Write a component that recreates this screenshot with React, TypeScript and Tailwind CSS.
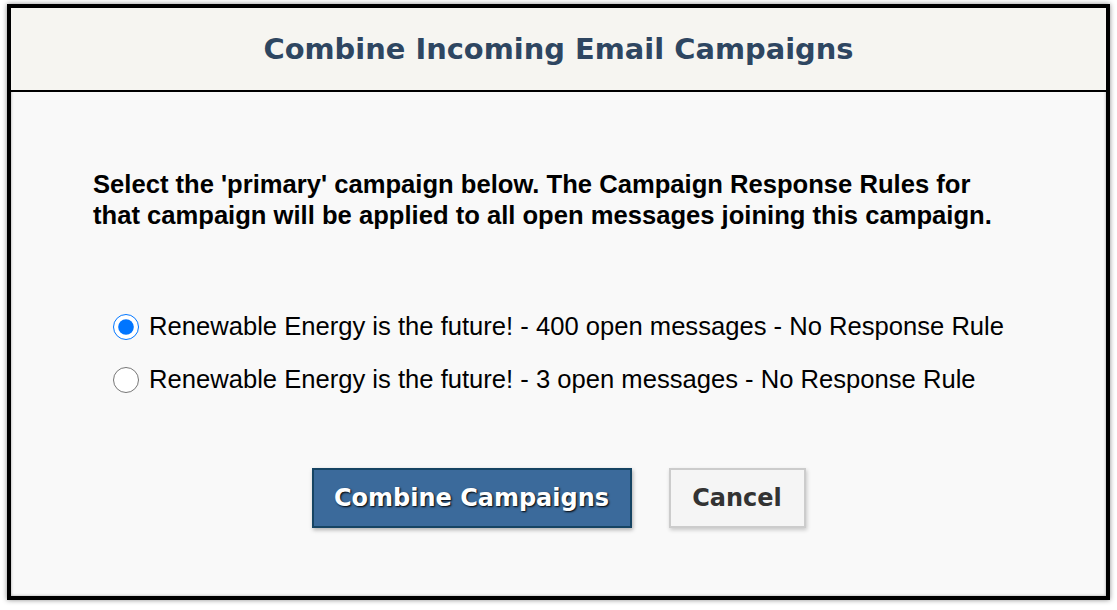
import { useState } from "react";

const campaigns = [
  { id: "c400", label: "Renewable Energy is the future! - 400 open messages - No Response Rule" },
  { id: "c3", label: "Renewable Energy is the future! - 3 open messages - No Response Rule" },
];

export default function App() {
  const [primary, setPrimary] = useState("c400");

  return (
    <div className="h-[610px] w-[1117px] overflow-hidden bg-white pl-[7px] pt-[4px]">
      <div className="flex h-[596px] w-[1103px] flex-col border-4 border-black bg-[#f9f9f9] shadow-[0_0_5px_rgba(0,0,0,0.45),inset_0_0_3px_rgba(0,0,0,0.35)]">
        <header className="flex h-[84px] shrink-0 items-center justify-center border-b-2 border-black bg-[#f6f5f1]">
          <h1 className="pt-[2px] font-['DejaVu_Sans',sans-serif] text-[28.9px] font-bold text-[#2e4661]">Combine Incoming Email Campaigns</h1>
        </header>

        <div className="flex flex-col pl-[82px] pt-[77px] font-['Liberation_Sans',Arial,sans-serif]">
          <p className="text-[25.6px] font-bold leading-[31px] text-black">
            Select the 'primary' campaign below. The Campaign Response Rules for
            <br />
            that campaign will be applied to all open messages joining this campaign.
          </p>

          <div className="mt-[69px] flex flex-col pl-[20px]">
            {campaigns.map((c) => (
              <label key={c.id} className="flex h-[53px] items-center gap-[10px] text-[25.6px] leading-[53px] text-black">
                <input
                  type="radio"
                  name="primary"
                  checked={primary === c.id}
                  onChange={() => setPrimary(c.id)}
                  className="m-0 h-[26px] w-[26px]"
                />
                {c.label}
              </label>
            ))}
          </div>
        </div>

        <div className="mt-[62px] flex justify-center gap-[37px] font-['DejaVu_Sans',sans-serif]">
          <button className="h-[60px] w-[320px] border-2 border-[#164463] bg-[#3b6a9b] text-[24px] font-bold text-white shadow-[1px_2px_4px_rgba(0,0,0,0.3)] [text-shadow:1px_1px_2px_#000]">
            Combine Campaigns
          </button>
          <button className="h-[60px] w-[137px] border-2 border-[#cccccc] bg-[#f5f5f5] text-[24px] font-bold text-[#333333] shadow-[1px_2px_4px_rgba(0,0,0,0.2)]">
            Cancel
          </button>
        </div>
      </div>
    </div>
  );
}
